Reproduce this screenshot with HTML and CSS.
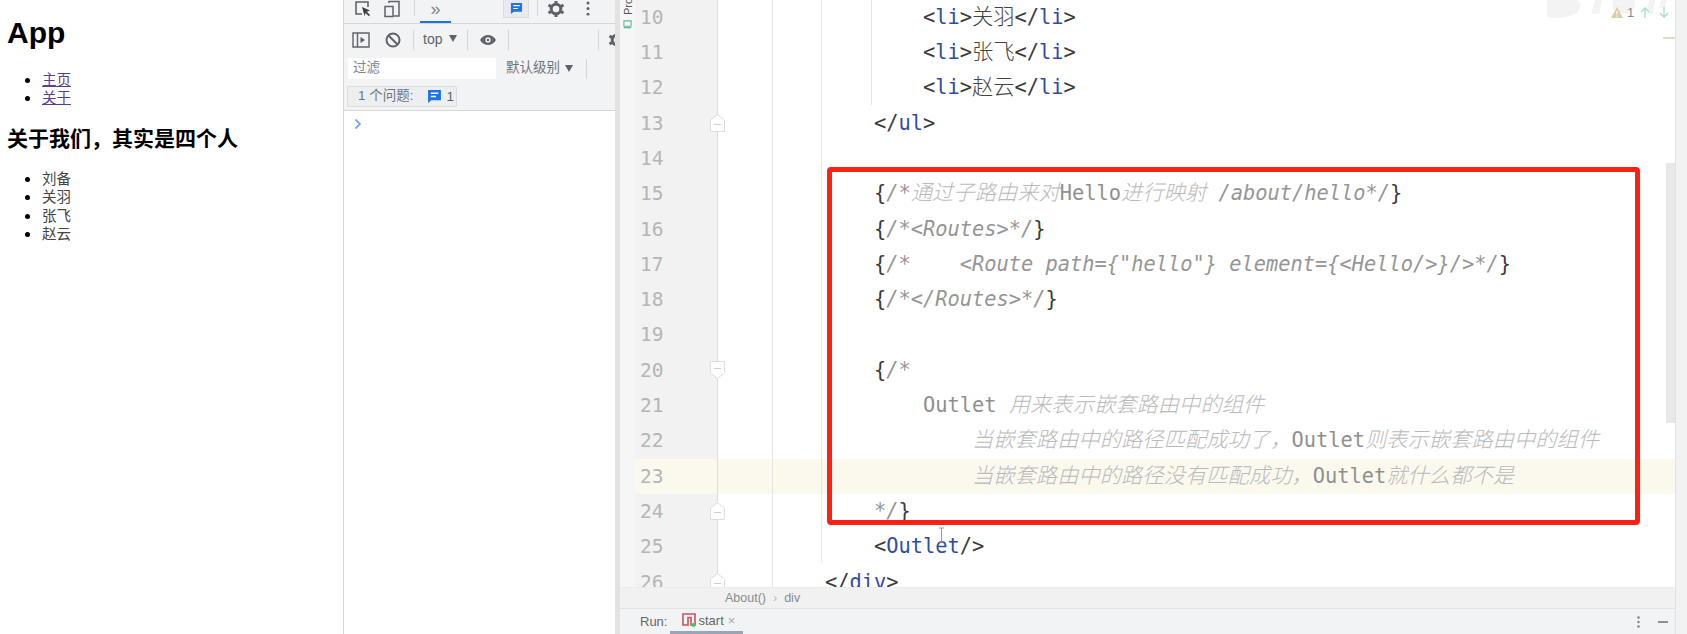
FILE: index.html
```html
<!DOCTYPE html>
<html lang="zh">
<head>
<meta charset="utf-8">
<title>About</title>
<link rel="stylesheet" href="styles.css">
</head>
<body>
<div class="screen">
  <main class="page">
    <h1>App</h1>
    <ul class="nav">
      <li><a href="#">主页</a></li>
      <li><a href="#">关于</a></li>
    </ul>
    <h3>关于我们&#xFF0C;其实是四个人</h3>
    <ul class="people">
      <li>刘备</li>
      <li>关羽</li>
      <li>张飞</li>
      <li>赵云</li>
    </ul>
  </main>

  <section class="devtools">
    <div class="tb tb1">
      <svg class="i inspect" viewBox="0 0 18 18"><path d="M8 14H2V2h12v5" fill="none" stroke="#5f6368" stroke-width="1.6"/><path d="M8 7l8 3.5-3.2 1.3L16 15l-1.2 1.2-3.2-3.2L10.500 16z" fill="#3c4043"/></svg>
      <svg class="i device" viewBox="0 0 18 18"><path d="M6 3V1.500h10V16H11M2 6.500h8V16.500H2z" fill="none" stroke="#5f6368" stroke-width="1.500"/></svg>
      <span class="sep sep1"></span>
      <span class="tab">»</span>
      <span class="issues-btn"><svg class="msg" viewBox="0 0 14 14"><path d="M1 1h12v9.500H4L1 13z" fill="#1a73e8"/><path d="M3.500 4h7M3.500 7h5" stroke="#fff" stroke-width="1.300"/></svg></span>
      <span class="sep sep2"></span>
      <svg class="i gear" viewBox="0 0 18 18"><circle cx="9" cy="9" r="4.800" fill="none" stroke="#5f6368" stroke-width="3"/><path d="M9 1v3M9 14v3M1.500 5l2.600 1.500M13.900 11.500l2.600 1.500M1.500 13l2.600-1.500M13.900 6.500l2.600-1.500" stroke="#5f6368" stroke-width="3"/></svg>
      <svg class="dots" viewBox="0 0 4 16"><circle cx="2" cy="2" r="1.600" fill="#5f6368"/><circle cx="2" cy="8" r="1.600" fill="#5f6368"/><circle cx="2" cy="14" r="1.600" fill="#5f6368"/></svg>
    </div>
    <div class="tb tb2">
      <svg class="i sidebar" viewBox="0 0 18 18"><path d="M1 2h16v14H1zM5.500 2v14" fill="none" stroke="#5f6368" stroke-width="1.400"/><path d="M8.500 6l4.500 3-4.500 3z" fill="#5f6368"/></svg>
      <svg class="i block" viewBox="0 0 18 18"><circle cx="9" cy="9" r="6.500" fill="none" stroke="#5f6368" stroke-width="2"/><path d="M4.500 4.500l9 9" stroke="#5f6368" stroke-width="2"/></svg>
      <span class="sep sep3"></span>
      <span class="top">top</span>
      <span class="caret caret-top"></span>
      <span class="sep sep4"></span>
      <svg class="eye" viewBox="0 0 18 12"><path d="M1 6c2-3.500 5-5 8-5s6 1.500 8 5c-2 3.500-5 5-8 5S3 9.500 1 6z" fill="#5f6368"/><circle cx="9" cy="6" r="2.700" fill="#f1f3f4"/><circle cx="9" cy="6" r="1.300" fill="#5f6368"/></svg>
      <span class="sep sep5"></span>
      <span class="sep sep6"></span>
      <svg class="i gear-cut" viewBox="0 0 18 18"><circle cx="9" cy="9" r="4.800" fill="none" stroke="#5f6368" stroke-width="3"/><path d="M9 1v3M9 14v3M1.500 5l2.600 1.500M1.500 13l2.600-1.500" stroke="#5f6368" stroke-width="3"/></svg>
    </div>
    <div class="tb tb3">
      <span class="filter">过滤</span>
      <span class="level">默认级别</span>
      <span class="caret caret-level"></span>
      <span class="sep sep7"></span>
    </div>
    <div class="tb tb4">
      <span class="issue-count"><span class="issue-text">1 个问题:</span><svg class="msg msg-small" viewBox="0 0 14 14"><path d="M1 1h12v9.500H4L1 13z" fill="#1a73e8"/><path d="M3.500 4h7M3.500 7h5" stroke="#fff" stroke-width="1.300"/></svg><span class="issue-num">1</span></span>
    </div>
    <div class="console"><svg class="prompt" viewBox="0 0 8 12"><path d="M1.500 1.500L6 6l-4.500 4.500" fill="none" stroke="#7ba7e8" stroke-width="1.800"/></svg></div>
  </section>

  <section class="ide">
    <div class="ide-col">
      <div class="ide-main">
        <aside class="strip">
          <span class="project">Project</span>
          <svg class="project-icon" viewBox="0 0 10 10"><path d="M1 1h8v6H1z" fill="none" stroke="#5fb8a0" stroke-width="1.200"/><path d="M1 8.500h8" stroke="#5fb8a0" stroke-width="1.500"/></svg>
        </aside>
        <div class="editor">
          <div class="row"><span class="num">10</span><code class="code">            <b>&lt;</b><i class="tag">li</i><b>&gt;</b><span class="cjk">关羽</span><b>&lt;/</b><i class="tag">li</i><b>&gt;</b></code></div>
          <div class="row"><span class="num">11</span><code class="code">            <b>&lt;</b><i class="tag">li</i><b>&gt;</b><span class="cjk">张飞</span><b>&lt;/</b><i class="tag">li</i><b>&gt;</b></code></div>
          <div class="row"><span class="num">12</span><code class="code">            <b>&lt;</b><i class="tag">li</i><b>&gt;</b><span class="cjk">赵云</span><b>&lt;/</b><i class="tag">li</i><b>&gt;</b></code></div>
          <div class="row"><span class="num">13<svg class="fold" viewBox="0 0 15 18"><path d="M.5 17.500V6L7.500.7l7 5.300v11.500z" fill="#fff" stroke="#ddd"/><path d="M4 10.500h7" stroke="#ccc"/></svg></span><code class="code">        <b>&lt;/</b><i class="tag">ul</i><b>&gt;</b></code></div>
          <div class="row"><span class="num">14</span><code class="code"></code></div>
          <div class="row"><span class="num">15</span><code class="code">        <b>{</b><em>/*</em><em class="cjk">通过子路由来对</em><span class="cm">Hello</span><em class="cjk">进行映射</em><em> /about/hello*/</em><b>}</b></code></div>
          <div class="row"><span class="num">16</span><code class="code">        <b>{</b><em>/*&lt;Routes&gt;*/</em><b>}</b></code></div>
          <div class="row"><span class="num">17</span><code class="code">        <b>{</b><em>/*    &lt;Route path={"hello"} element={&lt;Hello/&gt;}/&gt;*/</em><b>}</b></code></div>
          <div class="row"><span class="num">18</span><code class="code">        <b>{</b><em>/*&lt;/Routes&gt;*/</em><b>}</b></code></div>
          <div class="row"><span class="num">19</span><code class="code"></code></div>
          <div class="row"><span class="num">20<svg class="fold" viewBox="0 0 15 18"><path d="M.5.500V12l7 5.300 7-5.300V.500z" fill="#fff" stroke="#ddd"/><path d="M4 7.500h7" stroke="#ccc"/></svg></span><code class="code">        <b>{</b><em>/*</em></code></div>
          <div class="row"><span class="num">21</span><code class="code">            <span class="cm">Outlet</span> <em class="cjk">用来表示嵌套路由中的组件</em></code></div>
          <div class="row"><span class="num">22</span><code class="code">                <em class="cjk">当嵌套路由中的路径匹配成功了&#xFF0C;</em><span class="cm">Outlet</span><em class="cjk">则表示嵌套路由中的组件</em></code></div>
          <div class="row hl"><span class="num">23</span><code class="code">                <em class="cjk">当嵌套路由中的路径没有匹配成功&#xFF0C;</em><span class="cm">Outlet</span><em class="cjk">就什么都不是</em></code></div>
          <div class="row"><span class="num">24<svg class="fold" viewBox="0 0 15 18"><path d="M.5 17.500V6L7.500.7l7 5.300v11.500z" fill="#fff" stroke="#ddd"/><path d="M4 10.500h7" stroke="#ccc"/></svg></span><code class="code">        <em>*/</em><b>}</b></code></div>
          <div class="row"><span class="num">25</span><code class="code">        <b>&lt;</b><i class="tag">Outlet</i><b>/&gt;</b></code></div>
          <div class="row"><span class="num">26<svg class="fold" viewBox="0 0 15 18"><path d="M.5 17.500V6L7.500.7l7 5.300v11.500z" fill="#fff" stroke="#ddd"/><path d="M4 10.500h7" stroke="#ccc"/></svg></span><code class="code">    <b>&lt;/</b><i class="tag">div</i><b>&gt;</b></code></div>

          <span class="guide guide-a"></span>
          <span class="guide guide-b"></span>
          <span class="guide guide-c"></span>
          <svg class="caret-cursor" viewBox="0 0 7 16"><path d="M1 1h5M3.500 1v14M1 15h5" fill="none" stroke="#999" stroke-width="1"/></svg>
          <svg class="watermark" viewBox="0 0 125 20"><path d="M2 0h30q8 6-2 14-14 6-28 3zM50 0l-4 14h8l3-14zM68 0q-3 12 10 14 14-2 12-14zM104 0l-3 14h7l2-14zM116 0l-2 8h6l1-8z" fill="#f3f3f3"/></svg>
          <div class="inspection">
            <svg class="warn" viewBox="0 0 12 11"><path d="M6 0l6 11H0z" fill="#d8cfa8"/><path d="M6 4v3.500M6 8.500v1.200" stroke="#fff" stroke-width="1.200"/></svg>
            <span class="warn-num">1</span>
            <svg class="arrow arrow-up" viewBox="0 0 10 11"><path d="M5 11V1M1 5l4-4 4 4" fill="none" stroke="#a8dccf" stroke-width="1.300"/></svg>
            <svg class="arrow arrow-down" viewBox="0 0 10 11"><path d="M5 0v10M1 6l4 4 4-4" fill="none" stroke="#a8dccf" stroke-width="1.300"/></svg>
          </div>
          <span class="mark"></span>
          <span class="thumb"></span>
          <div class="highlight-box"></div>
        </div>
      </div>
      <div class="crumbs"><span>About()</span><span class="crumb-sep">›</span><span>div</span></div>
      <div class="runbar">
        <span class="run-label">Run:</span>
        <span class="run-tab">
          <svg class="npm" viewBox="0 0 14 14"><path d="M1 1h12v11H9V4.500H6V12H1z" fill="none" stroke="#c9545a" stroke-width="1.600"/><circle cx="11.500" cy="12" r="2" fill="#4cc35a"/></svg>
          <span>start</span><span class="close">×</span>
        </span>
        <svg class="run-dots" viewBox="0 0 3 12"><circle cx="1.500" cy="1.500" r="1.200" fill="#7a7f85"/><circle cx="1.500" cy="6" r="1.200" fill="#7a7f85"/><circle cx="1.500" cy="10.500" r="1.200" fill="#7a7f85"/></svg>
        <span class="run-min"></span>
      </div>
    </div>
    <div class="rail"></div>
  </section>
</div>
</body>
</html>
```

FILE: styles.css
```css
html, body {
  margin: 0;
  padding: 0;
  background: #fff;
}

.screen {
  display: flex;
  width: 1687px;
  height: 634px;
  overflow: hidden;
  font-family: "Liberation Sans", "Noto Sans CJK SC", sans-serif;
}

/* Rendered page */
.page {
  width: 336px;
  flex: none;
  padding-left: 7px;
  border-right: 1px solid #d6d6d6;
  color: #000;
}

.page h1 {
  margin: 15px 0 0;
  font-size: 30px;
  line-height: 36px;
  font-weight: 700;
}

.page ul {
  margin: 0;
  padding: 0 0 0 35px;
  font-size: 14.5px;
  line-height: 18.4px;
  color: #444;
}

.page li {
  height: 18.4px;
}

.page li::marker {
  font-size: 18px;
  color: #000;
}

.nav {
  padding-top: 19px !important;
}

.page a {
  color: #5b3c94;
  text-decoration: underline;
}

.page h3 {
  margin: 18px 0 0;
  font-size: 21px;
  line-height: 28px;
  font-weight: 700;
}

.people {
  padding-top: 16px !important;
}

/* DevTools */
.devtools {
  width: 271px;
  flex: none;
  display: flex;
  flex-direction: column;
  background: #fff;
}

.tb {
  flex: none;
  display: flex;
  align-items: center;
  overflow: hidden;
  background: #f1f3f4;
  color: #5f6368;
  font-size: 13.5px;
}

.tb1 { height: 23px; border-bottom: 1px solid #d4d6d8; align-items: flex-start; }
.tb2 { height: 31px; }
.tb3 { height: 27px; }
.tb4 { height: 28px; border-bottom: 1px solid #d4d6d8; }

.i { width: 18px; height: 18px; flex: none; }
.inspect { margin: 0 0 0 10px; }
.device { margin-left: 11px; }

.sep {
  width: 1px;
  height: 20px;
  flex: none;
  background: #d3d5d7;
}

.tb1 .sep { height: 16px; }
.sep1 { margin-left: 13px; }

.tab {
  width: 31px;
  height: 21px;
  margin-left: 5px;
  flex: none;
  text-align: center;
  font-size: 18px;
  line-height: 18px;
  color: #80868b;
  border-bottom: 2px solid #1a73e8;
}

.issues-btn {
  width: 26px;
  height: 18px;
  margin-left: 52px;
  flex: none;
  display: flex;
  align-items: center;
  justify-content: center;
  background: #e8eaed;
  border: 1px solid #dadce0;
  border-top: 0;
  box-sizing: border-box;
}

.msg { width: 13px; height: 13px; flex: none; }
.sep2 { margin-left: 8px; }
.gear { margin-left: 9px; }
.dots { width: 4px; height: 15px; margin: 1px 0 0 21px; flex: none; }

.sidebar { margin-left: 8px; }
.block { margin-left: 14px; }
.sep3 { margin-left: 11px; }
.top { margin: 0 0 2px 9px; font-size: 14px; line-height: 18px; }
.caret {
  width: 0;
  height: 0;
  flex: none;
  border-left: 4px solid transparent;
  border-right: 4px solid transparent;
  border-top: 7px solid #5f6368;
}
.caret-top { margin-left: 7px; margin-bottom: 2px; }
.sep4 { margin-left: 10px; }
.eye { width: 18px; height: 12px; margin-left: 11px; flex: none; }
.sep5 { margin-left: 11px; }
.sep6 { margin-left: 89px; }
.gear-cut { margin-left: 9px; }

.filter {
  width: 143px;
  height: 21px;
  margin-left: 4px;
  padding-left: 5px;
  flex: none;
  background: #fff;
  line-height: 20px;
  color: #80868b;
}
.level { margin: 0 0 2px 10px; color: #70757a; line-height: 18px; }
.caret-level { margin: 0 0 0 5px; }
.sep7 { margin-left: 13px; }

.issue-count {
  height: 21px;
  width: 110px;
  margin-left: 3px;
  padding-left: 10px;
  box-sizing: border-box;
  display: flex;
  align-items: center;
  border: 1px solid #dadce0;
  border-radius: 2px;
  background: #eceef0;
  white-space: pre;
}
.issue-text { line-height: 17px; margin-bottom: 2px; color: #70757a; }
.msg-small { width: 15px; height: 15px; margin-left: 13px; }
.issue-num { margin-left: 5px; }

.console {
  flex: 1;
  background: #fff;
  padding: 7px 0 0 10px;
}
.prompt { display: block; width: 8px; height: 12px; }

/* IDE */
.ide {
  flex: 1;
  min-width: 0;
  display: flex;
  border-left: 5px solid #e2e2e2;
  background: #fff;
}

.ide-col {
  flex: 1;
  min-width: 0;
  display: flex;
  flex-direction: column;
}

.ide-main {
  flex: 1;
  min-height: 0;
  display: flex;
}

.strip {
  width: 15px;
  flex: none;
  background: #f6f6f6;
  display: flex;
  flex-direction: column;
  align-items: center;
  overflow: hidden;
}

.project {
  flex: none;
  height: 40px;
  margin-top: -25px;
  writing-mode: vertical-rl;
  transform: rotate(180deg);
  font-size: 11px;
  line-height: 12px;
  color: #555;
}

.project-icon { width: 9px; height: 9px; margin-top: 5px; flex: none; }

.editor {
  position: relative;
  flex: 1;
  min-width: 0;
  overflow: hidden;
}

.row {
  display: flex;
  height: 35.3px;
  position: relative;
  top: -0.2px;
}

.row.hl { background: #fbf9ee; }

.num {
  position: relative;
  width: 77px;
  padding-left: 5px;
  flex: none;
  background: #f2f2f2;
  border-right: 1px solid #dcdcdc;
  font: 19.5px/35.3px "DejaVu Sans Mono", monospace;
  color: #b5b5b5;
}

.hl .num { background: #fbf9ee; }

.fold {
  position: absolute;
  right: -8px;
  top: 8px;
  width: 15px;
  height: 18px;
}

.code {
  flex: 1;
  padding-left: 58px;
  white-space: pre;
  font: 20.35px/35.3px "DejaVu Sans Mono", "Noto Sans CJK SC", monospace;
  color: #444;
}

.code b { font-weight: 400; color: #3a3a3a; }
.code i.tag { font-style: normal; color: #2f4ba6; }
.code em { font-style: italic; color: #959595; }
.code .cm { color: #8f8f8f; }
.code .cjk {
  font-family: "Noto Sans CJK SC", sans-serif;
  font-size: 21.3px;
  font-weight: 300;
  line-height: 1;
}
.code span.cjk { color: #444; }
.code em.cjk { color: #bababa; }

.guide {
  position: absolute;
  width: 1px;
  background: #e6e6e6;
}
.guide-a { left: 137px; top: 0; bottom: 0; }
.guide-b { left: 186px; top: 0; height: 563px; }
.guide-c { left: 236px; top: 0; height: 105px; }

.caret-cursor {
  position: absolute;
  left: 303px;
  top: 527px;
  width: 7px;
  height: 16px;
}

.watermark {
  position: absolute;
  left: 910px;
  top: 0;
  width: 125px;
  height: 20px;
}

.inspection {
  position: absolute;
  right: 0;
  top: 6px;
  width: 64px;
  display: flex;
  align-items: center;
  font-size: 13px;
  line-height: 13px;
  color: #8a8a8a;
}
.warn { width: 12px; height: 11px; flex: none; }
.warn-num { margin-left: 4px; }
.arrow { width: 10px; height: 11px; flex: none; }
.arrow-up { margin-left: 6px; }
.arrow-down { margin-left: 9px; }

.mark {
  position: absolute;
  right: 0;
  top: 37px;
  width: 12px;
  height: 2px;
  background: #e0dcc4;
}

.thumb {
  position: absolute;
  right: 0;
  top: 163px;
  width: 9px;
  height: 260px;
  background: #e8e8e8;
}

.highlight-box {
  position: absolute;
  left: 192px;
  top: 167px;
  width: 803px;
  height: 348px;
  border: 5px solid #ff2015;
  border-radius: 4px;
}

.rail {
  width: 12px;
  flex: none;
  background: #f2f2f2;
  border-left: 1px solid #e2e2e2;
  box-sizing: border-box;
}

.crumbs {
  flex: none;
  height: 21px;
  padding-left: 105px;
  display: flex;
  align-items: center;
  gap: 7px;
  background: #f1f1f1;
  border-top: 1px solid #ececec;
  box-sizing: border-box;
  font-size: 12.5px;
  line-height: 17px;
  color: #8a8a8a;
}

.crumb-sep { color: #bbb; }

.runbar {
  flex: none;
  height: 26px;
  display: flex;
  align-items: center;
  background: #f2f3f5;
  border-top: 1px solid #e3e3e3;
  box-sizing: border-box;
  font-size: 13px;
  color: #666;
}

.run-label { margin-left: 20px; }

.run-tab {
  width: 73px;
  height: 25px;
  margin-left: 3px;
  padding-left: 12px;
  box-sizing: border-box;
  display: flex;
  align-items: center;
  gap: 2px;
  border-bottom: 3px solid #9aa5b5;
}

.npm { width: 14px; height: 14px; flex: none; }
.close { margin-left: 2px; color: #aaa; }
.run-dots { width: 3px; height: 12px; margin-left: auto; flex: none; }
.run-min { width: 10px; height: 2px; margin: 0 7px 0 18px; flex: none; background: #8a9099; }
```
